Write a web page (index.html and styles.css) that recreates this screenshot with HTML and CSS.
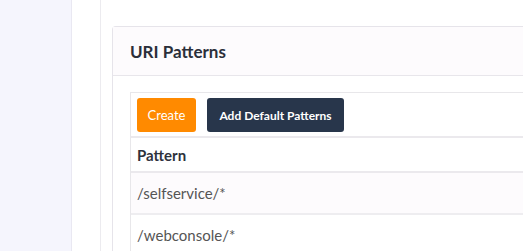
FILE: index.html
```html
<!DOCTYPE html>
<html lang="en">
<head>
    <meta charset="UTF-8">
    <title>URI Patterns</title>
    <link rel="stylesheet" href="styles.css">
</head>
<body>
    <div class="sidebar"></div>
    <div class="main">
        <div class="content">
            <div class="card">
                <div class="card-header">URI Patterns</div>
                <div class="card-body">
                    <div class="panel">
                        <div class="toolbar">
                            <button class="btn btn-create">Create</button>
                            <button class="btn btn-dark">Add Default Patterns</button>
                        </div>
                        <table class="patterns">
                            <thead>
                                <tr><th>Pattern</th></tr>
                            </thead>
                            <tbody>
                                <tr class="odd"><td>/selfservice/*</td></tr>
                                <tr><td>/webconsole/*</td></tr>
                            </tbody>
                        </table>
                    </div>
                </div>
            </div>
        </div>
    </div>
</body>
</html>
```

FILE: styles.css
```css
html, body { height: 100%; }
body {
    margin: 0;
    display: flex;
    font-family: 'Lato', 'Liberation Sans', sans-serif;
    color: #333;
    background: #fff;
    overflow: hidden;
}
.sidebar {
    width: 71px;
    flex: none;
    background: #f5f5fd;
    border-right: 1px solid #e9e8f2;
}
.main {
    flex: 1;
    padding-left: 28px;
}
.content {
    height: 100%;
    border-left: 1px solid #ecebef;
    padding: 26px 0 0 11px;
}
.card {
    border: 1px solid #e6e4ea;
    border-right: none;
    border-radius: 4px 0 0 0;
}
.card-header {
    height: 48px;
    display: flex;
    align-items: center;
    padding-left: 17px;
    background: #fdfbfd;
    border-bottom: 1px solid #e8e6eb;
    font-size: 17px;
    font-weight: bold;
    color: #2b2f3a;
}
.card-body {
    padding: 16px 0 0 17px;
}
.panel {
    border: 1px solid #e8e7ea;
    border-right: none;
}
.toolbar {
    display: flex;
    gap: 11px;
    padding: 5px 6px 4px;
}
.btn {
    height: 34px;
    border: none;
    border-radius: 3px;
    font-family: inherit;
    font-size: 13px;
    color: #fff;
    padding: 0;
}
.btn-create {
    width: 59px;
    background: #ff8a00;
}
.btn-dark {
    width: 137px;
    background: #28364b;
    font-size: 12px;
    font-weight: bold;
}
.patterns {
    width: 100%;
    border-collapse: collapse;
    font-size: 15px;
}
.patterns th {
    text-align: left;
    font-weight: bold;
    color: #2e323c;
    height: 33px;
    padding: 0 6px;
    border-top: 2px solid #ebe9ed;
    border-bottom: 2px solid #ebe9ed;
}
.patterns td {
    height: 40px;
    padding: 0 6px;
    color: #555;
    border-bottom: 2px solid #eeedf0;
}
.patterns tr.odd td { background: #fdfbfd; }
```
